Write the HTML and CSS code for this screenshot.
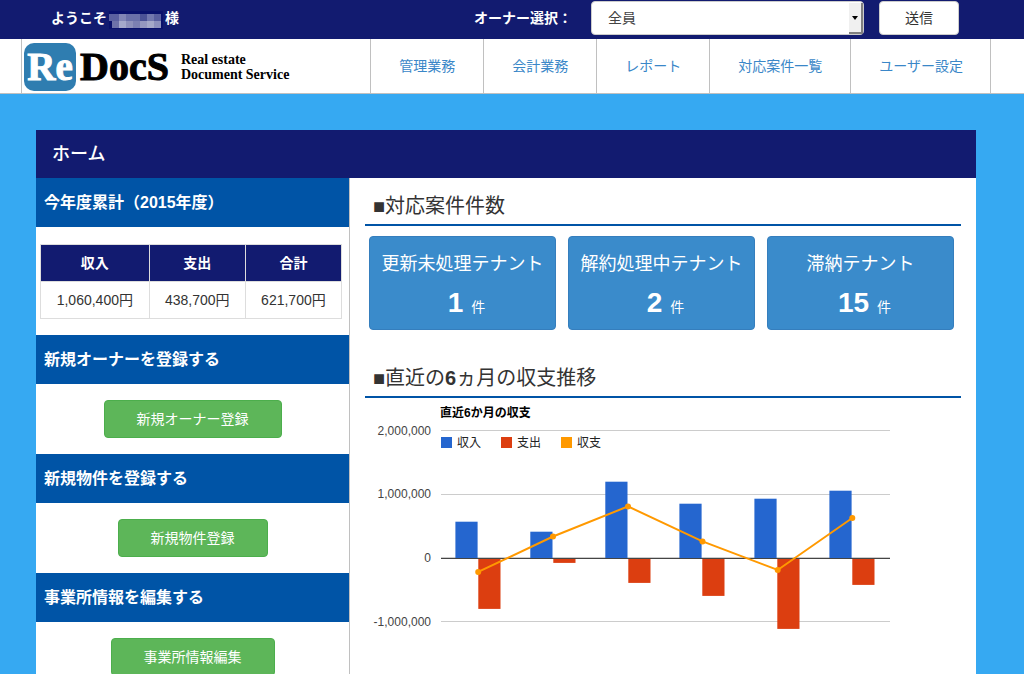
FILE: index.html
```html
<!DOCTYPE html>
<html lang="ja">
<head>
<meta charset="utf-8">
<meta name="viewport" content="width=device-width, initial-scale=1">
<title>ReDocS ホーム</title>
<link rel="stylesheet" href="styles.css">
</head>
<body>
<div class="topbar">
  <div class="container topbar-inner">
    <p class="greeting">ようこそ
      <svg class="mosaic" width="54" height="18" viewBox="0 0 54 18" aria-hidden="true">
        <rect width="54" height="18" fill="#09116c"/>
        <path fill="#5b61a0" d="M0 3h10v7H0z"/><path fill="#8286b6" d="M10 3h7v7h-7z"/><path fill="#6a70a9" d="M17 3h14v7H17z"/><path fill="#4b5296" d="M31 3h7v7h-7z"/><path fill="#7278ae" d="M38 3h7v7h-7z"/><path fill="#595f9f" d="M45 3h7v7h-7z"/>
        <path fill="#6d72a9" d="M3 10h7v7H3z"/><path fill="#a5a9cb" d="M10 10h7v7h-7z"/><path fill="#8e91bb" d="M17 10h7v7h-7z"/><path fill="#7c80b2" d="M24 10h7v7h-7z"/><path fill="#9598c0" d="M31 10h7v7h-7z"/><path fill="#a5a9c9" d="M38 10h7v7h-7z"/><path fill="#8d91bd" d="M45 10h7v7h-7z"/>
      </svg>様</p>
    <form class="owner-form">
      <label for="owner">オーナー選択：</label>
      <span class="select-box">
        <select id="owner"><option>全員</option></select>
        <span class="select-arrow"></span>
      </span>
      <button type="button" class="send">送信</button>
    </form>
  </div>
</div>
<header class="header">
  <div class="container header-inner">
    <a class="logo" href="#">
      <span class="logo-re">Re</span><span class="logo-docs">DocS</span>
      <span class="logo-tag">Real estate<br>Document Service</span>
    </a>
    <nav class="nav">
      <a href="#">管理業務</a>
      <a href="#">会計業務</a>
      <a href="#">レポート</a>
      <a href="#">対応案件一覧</a>
      <a href="#">ユーザー設定</a>
    </nav>
  </div>
</header>
<main class="page">
  <div class="container">
    <div class="panel">
      <h1 class="page-title">ホーム</h1>
      <div class="columns">
        <aside class="sidebar">
          <h2 class="side-title">今年度累計（2015年度）</h2>
          <div class="side-body side-table">
            <table class="totals">
              <thead><tr><th>収入</th><th>支出</th><th>合計</th></tr></thead>
              <tbody><tr><td>1,060,400円</td><td>438,700円</td><td>621,700円</td></tr></tbody>
            </table>
          </div>
          <h2 class="side-title">新規オーナーを登録する</h2>
          <div class="side-body"><button type="button" class="btn">新規オーナー登録</button></div>
          <h2 class="side-title">新規物件を登録する</h2>
          <div class="side-body"><button type="button" class="btn">新規物件登録</button></div>
          <h2 class="side-title">事業所情報を編集する</h2>
          <div class="side-body"><button type="button" class="btn">事業所情報編集</button></div>
        </aside>
        <section class="content">
          <h2 class="section-title">■対応案件件数</h2>
          <div class="tiles">
            <a class="tile" href="#"><span class="tile-name">更新未処理テナント</span><span class="tile-count"><b>1</b> 件</span></a>
            <a class="tile" href="#"><span class="tile-name">解約処理中テナント</span><span class="tile-count"><b>2</b> 件</span></a>
            <a class="tile" href="#"><span class="tile-name">滞納テナント</span><span class="tile-count"><b>15</b> 件</span></a>
          </div>
          <h2 class="section-title">■直近の<b>6</b>ヵ月の収支推移</h2>
          <svg class="chart" viewBox="0 0 596 290" role="img" aria-label="直近6か月の収支">
            <g class="grid">
              <path d="M76 32.5H525M76 96.5H525M76 159.5H525M76 223.5H525"/>
            </g>
            <text class="chart-title" x="75" y="19">直近6か月の収支</text>
            <g class="axis">
              <text x="66" y="37">2,000,000</text>
              <text x="66" y="100">1,000,000</text>
              <text x="66" y="164">0</text>
              <text x="66" y="228">-1,000,000</text>
            </g>
            <g class="legend">
              <rect class="income" x="76" y="39" width="11" height="11"/><text x="92" y="49">収入</text>
              <rect class="expense" x="136" y="39" width="11" height="11"/><text x="152" y="49">支出</text>
              <rect class="balance" x="196" y="39" width="11" height="11"/><text x="212" y="49">収支</text>
            </g>
            <g class="income">
              <rect x="90.4" y="123.7" width="22.2" height="36.3"/>
              <rect x="165.3" y="133.7" width="22.2" height="26.3"/>
              <rect x="240.3" y="83.7" width="22.2" height="76.3"/>
              <rect x="314.4" y="105.7" width="22.2" height="54.3"/>
              <rect x="389.4" y="100.7" width="22.2" height="59.3"/>
              <rect x="464.4" y="92.7" width="22.2" height="67.3"/>
            </g>
            <g class="expense">
              <rect x="113.3" y="160" width="22.2" height="50.9"/>
              <rect x="188.3" y="160" width="22.2" height="4.9"/>
              <rect x="263.3" y="160" width="22.2" height="24.9"/>
              <rect x="337.3" y="160" width="22.2" height="37.9"/>
              <rect x="412.3" y="160" width="22.2" height="70.9"/>
              <rect x="487.3" y="160" width="22.2" height="26.9"/>
            </g>
            <path class="zero" d="M76 160.5H525"/>
            <polyline class="trend" points="113.2,173.9 188,138.5 263,108.4 337.5,143.4 412.7,172 487.3,120"/>
            <g class="balance">
              <circle cx="113.2" cy="173.9" r="3"/><circle cx="188" cy="138.5" r="3"/><circle cx="263" cy="108.4" r="3"/><circle cx="337.5" cy="143.4" r="3"/><circle cx="412.7" cy="172" r="3"/><circle cx="487.3" cy="120" r="3"/>
            </g>
          </svg>
        </section>
      </div>
    </div>
  </div>
</main>
</body>
</html>
```

FILE: styles.css
```css
* { box-sizing: border-box; }
body {
  margin: 0;
  background: #36a9f2;
  color: #333;
  font: 14px/20px "Liberation Sans", "Noto Sans CJK JP", sans-serif;
}
h1, h2, p { margin: 0; }
a { text-decoration: none; }
button, select { font: inherit; }

.topbar, .header, .page { padding-right: 12px; }
.container { max-width: 970px; margin: 0 auto; }

.topbar { background: #121b70; color: #fff; }
.topbar-inner {
  display: flex;
  justify-content: space-between;
  align-items: flex-start;
  padding: 1px 32px 4px 30px;
}
.greeting {
  display: flex;
  align-items: center;
  gap: 2px;
  height: 34px;
  font-weight: 700;
}
.mosaic { margin-top: 3px; }
.owner-form { display: flex; align-items: center; }
.owner-form label { margin-right: 19px; font-weight: 700; }
.select-box { position: relative; display: flex; width: 273px; margin-right: 15px; }
.select-box select {
  appearance: none;
  width: 100%;
  height: 34px;
  padding: 0 32px 0 16px;
  border: 1px solid #ccc;
  border-radius: 4px;
  background: #fff;
  color: #444;
}
.select-arrow {
  position: absolute;
  top: 2px;
  right: 1px;
  bottom: 1px;
  width: 14px;
  border: solid #808080;
  border-width: 0 2px 2px 0;
  background: #f0f0f0;
  pointer-events: none;
}
.select-arrow::after {
  content: "";
  position: absolute;
  top: 13px;
  left: 3px;
  border: solid transparent;
  border-width: 4px 3px 0;
  border-top-color: #000;
}
.send {
  width: 80px;
  height: 34px;
  padding: 0;
  border: 1px solid #ccc;
  border-radius: 4px;
  background: #fff;
  color: #333;
}

.header { background: #fff; border-bottom: 1px solid #c0c0c0; }
.header-inner {
  display: flex;
  justify-content: space-between;
  border: solid #c0c0c0;
  border-width: 0 1px;
}
.logo {
  display: flex;
  align-items: center;
  padding: 2px 0 0 2px;
  color: #000;
  font-family: "Liberation Serif", serif;
  font-weight: 700;
}
.logo-re {
  width: 52px;
  border-radius: 10px;
  background: #2f7db0;
  color: #fff;
  font-size: 39px;
  line-height: 48px;
  text-align: center;
}
.logo-docs { margin: 0 12px 0 4px; font-size: 40px; line-height: 48px; }
.logo-re, .logo-docs { -webkit-text-stroke: 1px currentColor; }
.logo-tag { font-size: 14px; line-height: 15px; }
.nav { display: flex; }
.nav a {
  padding: 17px 28px;
  border-left: 1px solid #c0c0c0;
  color: #3a87c8;
}
.nav a:last-child { padding-right: 27px; }

.page { padding-top: 36px; }
.panel { margin: 0 15px; background: #fff; }
.page-title {
  padding: 0 16px;
  background: #121b70;
  color: #fff;
  font-size: 18px;
  font-weight: 500;
  line-height: 48px;
}
.columns { display: flex; }
.sidebar { flex: 0 0 314px; border-right: 1px solid #c0c0c0; }
.side-title {
  padding: 0 8px;
  background: #0054a6;
  color: #fff;
  font-size: 16px;
  font-weight: 700;
  line-height: 49px;
}
.side-body { padding: 16px 0; text-align: center; }
.side-table { padding: 17px 7px 16px 4px; }
.totals { width: 100%; border-collapse: collapse; }
.totals th, .totals td { padding: 8px 12px; border: 1px solid #ddd; }
.totals th { background: #121b70; color: #fff; }
.btn {
  display: block;
  margin: 0 auto;
  padding: 8px 32px;
  border: 1px solid #4cae4c;
  border-radius: 4px;
  background: #5db659;
  color: #fff;
}

.content { flex: 1; min-width: 0; padding: 16px 15px 0; }
.section-title {
  padding: 0 8px 6px;
  border-bottom: 2px solid #0054a6;
  font-size: 20px;
  font-weight: 400;
  line-height: 24px;
}
.tiles {
  display: grid;
  grid-template-columns: repeat(3, 1fr);
  gap: 12px;
  padding: 10px 7px 36px 4px;
}
.tile {
  padding: 15px 0 5px;
  border: 1px solid #357ebd;
  border-radius: 4px;
  background: #3a8bcb;
  color: #fff;
  text-align: center;
}
.tile-name { display: block; font-size: 18px; line-height: 24px; }
.tile-count { display: block; padding: 10px 0 0 8px; line-height: 34px; }
.tile-count b { margin-right: 4px; font-size: 28px; }

.chart {
  display: block;
  width: 100%;
  font-size: 12px;
}
.grid path { stroke: #ccc; }
.chart-title { fill: #000; font-weight: 700; }
.axis text { fill: #444; text-anchor: end; }
.legend text { fill: #222; }
.income { fill: #2566cf; }
.expense { fill: #dc3e10; }
.balance { fill: #ff9900; }
.zero { stroke: #444; }
.trend { fill: none; stroke: #ff9900; stroke-width: 2; }
```
